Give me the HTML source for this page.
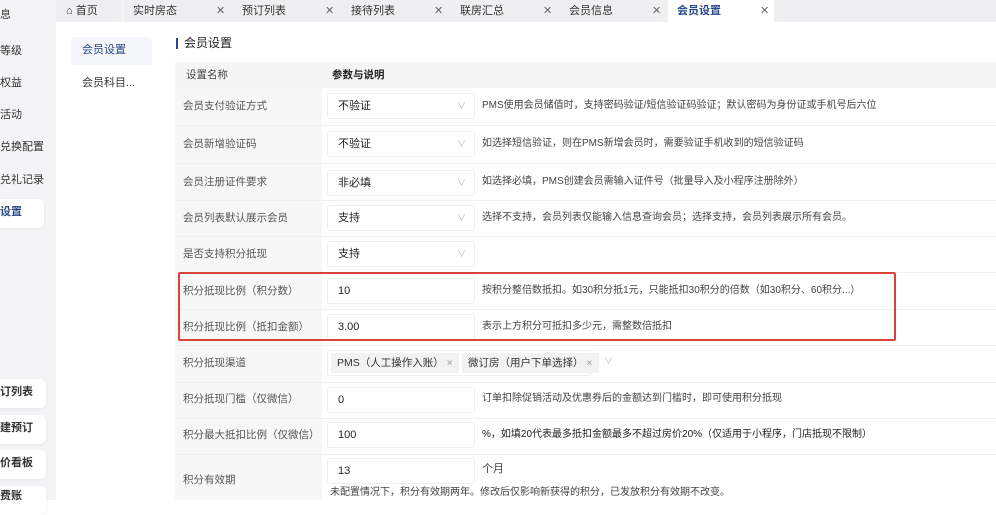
<!DOCTYPE html>
<html><head><meta charset="utf-8"><style>
*{margin:0;padding:0;box-sizing:border-box}
body{width:996px;height:500px;overflow:hidden;background:#fff;font-family:"Liberation Sans","Noto Sans CJK SC",sans-serif;font-size:10.5px;line-height:1.25;color:#333;position:relative}
.a{position:absolute;white-space:nowrap}
.side{left:0;top:0;width:56px;height:500px;background:#f4f4f6}
.sb{font-size:11px}
.tabs{left:56px;top:0;width:940px;height:22px;background:#efeff1}
.tab{top:0;height:22px;line-height:22px;font-size:11px;color:#333}
.x{color:#666;font-size:11px}
.card{background:#fff;border-radius:6px;box-shadow:0 1px 3px rgba(0,0,0,.06)}
.lab{left:175px;width:147px;background:#f7f7f7}
.inp{left:327px;width:148px;height:26px;background:#fff;border:1px solid #efefef;border-radius:3px;padding-left:10px;line-height:24px;font-size:11px;color:#222}
.chev{position:absolute;right:8px;top:0;color:#bbb;font-size:9px}
.lt{left:183px;color:#555}
.dt{left:482px;color:#444;font-size:10px}
.sep{left:175px;width:821px;height:1px;background:#f0f0f0}
</style></head><body>
<div class="a side"></div>
<div class="a sb" style="left:0;top:9px;color:#333">息</div>
<div class="a sb" style="left:0;top:45px">等级</div>
<div class="a sb" style="left:0;top:77px">权益</div>
<div class="a sb" style="left:0;top:109px">活动</div>
<div class="a sb" style="left:0;top:141px">兑换配置</div>
<div class="a sb" style="left:0;top:174px">兑礼记录</div>
<div class="a card" style="left:-10px;top:199px;width:54px;height:29px"></div>
<div class="a sb" style="left:0;top:206px;color:#2a4a8a;font-weight:bold">设置</div>
<div class="a card" style="left:-10px;top:379px;width:56px;height:29px"></div>
<div class="a sb" style="left:0;top:386px;font-weight:bold">订列表</div>
<div class="a card" style="left:-10px;top:415px;width:56px;height:29px"></div>
<div class="a sb" style="left:0;top:422px;font-weight:bold">建预订</div>
<div class="a card" style="left:-10px;top:450px;width:56px;height:29px"></div>
<div class="a sb" style="left:0;top:457px;font-weight:bold">价看板</div>
<div class="a card" style="left:-10px;top:486px;width:56px;height:29px"></div>
<div class="a sb" style="left:0;top:490px;font-weight:bold">费账</div>

<div class="a tabs"></div>
<div class="a" style="left:122px;top:0;width:2px;height:22px;background:#f7f7f8"></div>
<div class="a tab" style="left:66px">⌂ 首页</div>
<div class="a tab" style="left:133px">实时房态</div><div class="a tab x" style="left:216px">✕</div>
<div class="a tab" style="left:242px">预订列表</div><div class="a tab x" style="left:325px">✕</div>
<div class="a tab" style="left:351px">接待列表</div><div class="a tab x" style="left:434px">✕</div>
<div class="a tab" style="left:460px">联房汇总</div><div class="a tab x" style="left:543px">✕</div>
<div class="a tab" style="left:569px">会员信息</div><div class="a tab x" style="left:652px">✕</div>
<div class="a" style="left:668px;top:0;width:106px;height:22px;background:#fff"></div>
<div class="a tab" style="left:677px;color:#2a4a8a;font-weight:bold">会员设置</div><div class="a tab x" style="left:760px">✕</div>

<div class="a" style="left:71px;top:37px;width:81px;height:28px;background:#f4f6fa;border-radius:4px"></div>
<div class="a" style="left:82px;top:44px;color:#2a4a8a;font-size:11px">会员设置</div>
<div class="a" style="left:82px;top:77px;font-size:11px">会员科目...</div>

<div class="a" style="left:176px;top:38px;width:2px;height:11px;background:#2a4a8a"></div>
<div class="a" style="left:184px;top:36px;font-size:12px;color:#222">会员设置</div>

<div class="a" style="left:175px;top:62px;width:821px;height:26px;background:#f5f5f5"></div>
<div class="a" style="left:186px;top:69px;color:#444">设置名称</div>
<div class="a" style="left:332px;top:69px;font-weight:bold;color:#222">参数与说明</div>

<div class="a lab" style="top:88px;height:412px"></div>

<div class="a lt" style="top:100px">会员支付验证方式</div>
<div class="a inp" style="top:93px">不验证<span class="chev">∨</span></div>
<div class="a dt" style="top:100px">PMS使用会员储值时，支持密码验证/短信验证码验证；默认密码为身份证或手机号后六位</div>
<div class="a sep" style="top:125px"></div>

<div class="a lt" style="top:138px">会员新增验证码</div>
<div class="a inp" style="top:131px">不验证<span class="chev">∨</span></div>
<div class="a dt" style="top:138px">如选择短信验证，则在PMS新增会员时，需要验证手机收到的短信验证码</div>
<div class="a sep" style="top:163px"></div>

<div class="a lt" style="top:176px">会员注册证件要求</div>
<div class="a inp" style="top:170px">非必填<span class="chev">∨</span></div>
<div class="a dt" style="top:176px">如选择必填，PMS创建会员需输入证件号（批量导入及小程序注册除外）</div>
<div class="a sep" style="top:200px"></div>

<div class="a lt" style="top:212px">会员列表默认展示会员</div>
<div class="a inp" style="top:205px">支持<span class="chev">∨</span></div>
<div class="a dt" style="top:212px">选择不支持，会员列表仅能输入信息查询会员；选择支持，会员列表展示所有会员。</div>
<div class="a sep" style="top:236px"></div>

<div class="a lt" style="top:248px">是否支持积分抵现</div>
<div class="a inp" style="top:241px">支持<span class="chev">∨</span></div>
<div class="a sep" style="top:272px"></div>

<div class="a lt" style="top:285px">积分抵现比例（积分数）</div>
<div class="a inp" style="top:278px">10</div>
<div class="a dt" style="top:285px">按积分整倍数抵扣。如30积分抵1元，只能抵扣30积分的倍数（如30积分、60积分...）</div>
<div class="a sep" style="top:309px"></div>

<div class="a lt" style="top:321px">积分抵现比例（抵扣金额）</div>
<div class="a inp" style="top:314px">3.00</div>
<div class="a dt" style="top:321px">表示上方积分可抵扣多少元，需整数倍抵扣</div>
<div class="a sep" style="top:345px"></div>

<div class="a" style="left:178px;top:272px;width:718px;height:69px;border:2px solid #d9443a;border-radius:2px"></div>

<div class="a lt" style="top:357px">积分抵现渠道</div>
<div class="a" style="left:327px;top:350px;width:265px;height:26px;border:1px solid #efefef;border-radius:3px;background:#fff"></div>
<div class="a" style="left:331px;top:353px;height:20px;line-height:20px;padding:0 6px;background:#f2f2f2;color:#333;font-size:10.5px">PMS（人工操作入账） <span style="color:#999">×</span></div>
<div class="a" style="left:462px;top:353px;height:20px;line-height:20px;padding:0 6px;background:#f2f2f2;color:#333;font-size:10.5px">微订房（用户下单选择） <span style="color:#999">×</span></div>
<div class="a" style="left:604px;top:356px;color:#bbb;font-size:9px">∨</div>
<div class="a sep" style="top:382px"></div>

<div class="a lt" style="top:393px">积分抵现门槛（仅微信）</div>
<div class="a inp" style="top:387px">0</div>
<div class="a dt" style="top:393px">订单扣除促销活动及优惠券后的金额达到门槛时，即可使用积分抵现</div>
<div class="a sep" style="top:418px"></div>

<div class="a lt" style="top:429px">积分最大抵扣比例（仅微信）</div>
<div class="a inp" style="top:422px">100</div>
<div class="a dt" style="top:429px;color:#222">%，如填20代表最多抵扣金额最多不超过房价20%（仅适用于小程序，门店抵现不限制）</div>
<div class="a sep" style="top:454px"></div>

<div class="a lt" style="top:474px">积分有效期</div>
<div class="a inp" style="top:458px">13</div>
<div class="a dt" style="top:463px;font-size:11px">个月</div>
<div class="a" style="left:330px;top:487px;color:#444;font-size:10px">未配置情况下，积分有效期两年。修改后仅影响新获得的积分，已发放积分有效期不改变。</div>
</body></html>
